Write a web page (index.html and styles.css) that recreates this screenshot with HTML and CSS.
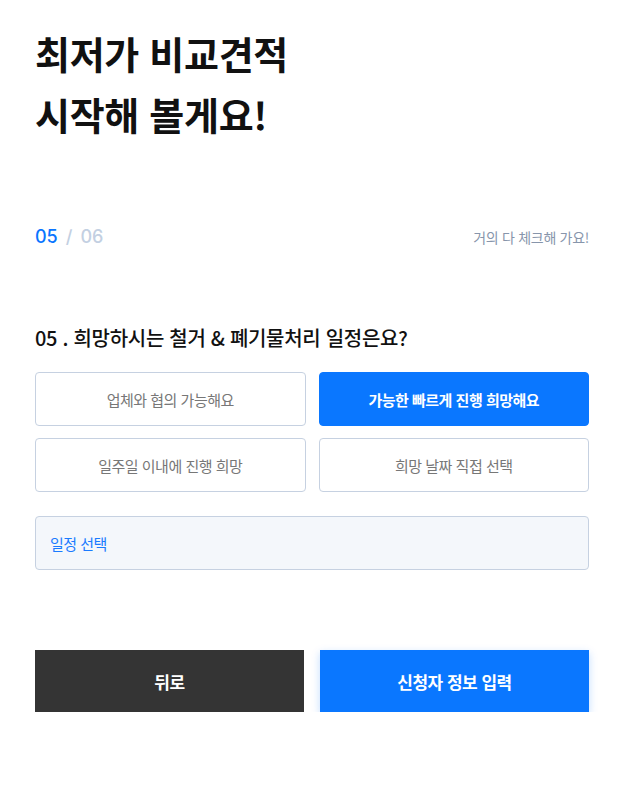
FILE: index.html
```html
<!DOCTYPE html>
<html lang="ko">
<head>
    <meta charset="UTF-8">
    <meta name="viewport" content="width=device-width, initial-scale=1.0">
    <title>최저가 비교견적</title>
    <link rel="stylesheet" href="styles.css">
</head>
<body>
    <div class="wrap">
        <h1 class="title">최저가 비교견적<br>시작해 볼게요!</h1>

        <div class="step">
            <div class="step-count"><span class="now">05</span><span class="slash">/</span><span class="total">06</span></div>
            <div class="step-msg">거의 다 체크해 가요!</div>
        </div>

        <h2 class="question">05 . 희망하시는 철거 &amp; 폐기물처리 일정은요?</h2>

        <div class="options">
            <button class="option">업체와 협의 가능해요</button>
            <button class="option active">가능한 빠르게 진행 희망해요</button>
            <button class="option">일주일 이내에 진행 희망</button>
            <button class="option">희망 날짜 직접 선택</button>
        </div>

        <div class="date-field">일정 선택</div>

        <div class="actions">
            <button class="btn btn-back">뒤로</button>
            <button class="btn btn-next">신청자 정보 입력</button>
        </div>
    </div>
</body>
</html>
```

FILE: styles.css
```css
* {
    margin: 0;
    padding: 0;
    box-sizing: border-box;
}
body {
    font-family: "Noto Sans CJK KR", "Noto Sans", sans-serif;
    background-color: #fff;
    color: #111;
}
.wrap {
    padding: 22px 42px 0 35px;
}
.title {
    font-size: 38px;
    font-weight: 700;
    line-height: 61px;
    letter-spacing: -0.3px;
    color: #111;
}
.step {
    display: flex;
    justify-content: space-between;
    align-items: center;
    margin-top: 82px;
}
.step-count {
    font-family: "Inter", "Noto Sans", sans-serif;
    font-size: 18px;
    font-weight: 500;
}
.now {
    color: #0a75ff;
}
.slash {
    color: #c3d0e2;
    margin: 0 8px;
}
.total {
    color: #c3d0e2;
}
.step-msg {
    font-size: 14px;
    color: #8795ab;
    letter-spacing: -0.3px;
}
.question {
    margin-top: 76px;
    font-size: 20px;
    font-weight: 500;
    letter-spacing: -0.3px;
    color: #111;
}
.options {
    display: grid;
    grid-template-columns: 1fr 1fr;
    column-gap: 13px;
    row-gap: 12px;
    margin-top: 20px;
}
.option {
    height: 54px;
    border: 1px solid #c6d1e1;
    border-radius: 4px;
    background: #fff;
    font-family: inherit;
    font-size: 15px;
    color: #777;
    letter-spacing: -0.5px;
    cursor: pointer;
}
.option.active {
    background-color: #0a77ff;
    border-color: #0a77ff;
    color: #fff;
    font-weight: 700;
}
.date-field {
    margin-top: 24px;
    height: 54px;
    display: flex;
    align-items: center;
    padding-left: 14px;
    background-color: #f4f7fb;
    border: 1px solid #c6d1e1;
    border-radius: 4px;
    font-size: 15px;
    color: #1a7bff;
    letter-spacing: -0.5px;
}
.actions {
    display: flex;
    gap: 16px;
    margin-top: 80px;
}
.btn {
    flex: 1;
    height: 62px;
    border: none;
    font-family: inherit;
    font-size: 17px;
    font-weight: 700;
    color: #fff;
    letter-spacing: -0.5px;
    cursor: pointer;
}
.btn-back {
    background-color: #343434;
}
.btn-next {
    background-color: #0a77ff;
    box-shadow: 0 3px 8px rgba(10, 119, 255, 0.25);
}
```
